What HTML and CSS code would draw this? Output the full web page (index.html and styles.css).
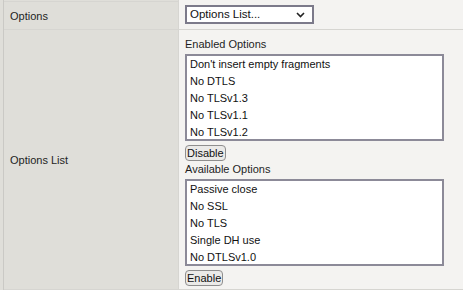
FILE: index.html
```html
<!DOCTYPE html>
<html lang="en">
<head>
  <meta charset="UTF-8">
  <title>Options</title>
  <link rel="stylesheet" href="styles.css">
</head>
<body>
  <div class="form">
    <div class="row prev">
      <div class="label"></div>
      <div class="field"></div>
    </div>

    <div class="row">
      <div class="label">Options</div>
      <div class="field top">
        <div class="dropdown">
          <span>Options List...</span>
          <svg class="chevron" width="9" height="6" viewBox="0 0 9 6">
            <polyline points="1,1 4.5,4.5 8,1" fill="none" stroke="#222" stroke-width="1.6"/>
          </svg>
        </div>
      </div>
    </div>

    <div class="row">
      <div class="label">Options List</div>
      <div class="field lists">
        <div class="caption">Enabled Options</div>
        <div class="listbox">
          <div class="item">Don't insert empty fragments</div>
          <div class="item">No DTLS</div>
          <div class="item">No TLSv1.3</div>
          <div class="item">No TLSv1.1</div>
          <div class="item">No TLSv1.2</div>
        </div>
        <button class="btn">Disable</button>

        <div class="caption">Available Options</div>
        <div class="listbox">
          <div class="item">Passive close</div>
          <div class="item">No SSL</div>
          <div class="item">No TLS</div>
          <div class="item">Single DH use</div>
          <div class="item">No DTLSv1.0</div>
        </div>
        <button class="btn">Enable</button>
      </div>
    </div>
  </div>
</body>
</html>
```

FILE: styles.css
```css
body {
  margin: 0;
  background-color: #dfded9;
  font-family: 'Liberation Sans', Arial, sans-serif;
  font-size: 11px;
  color: #1e1e1e;
}

.form {
  margin-left: 3px;
  border-left: 1px solid #cac9c5;
}

.row {
  display: flex;
  border-bottom: 1px solid #d6d5d1;
}

.prev {
  height: 1px;
}

.label {
  width: 168px;
  padding-left: 6px;
  border-right: 1px solid #d6d5d1;
  display: flex;
  align-items: center;
  background-color: #dfded9;
}

.field {
  flex: 1;
  background-color: #f4f3f1;
  padding: 3px 6px 5px;
}

.lists {
  padding-top: 6px;
  padding-bottom: 3px;
}

.dropdown {
  width: 122px;
  height: 15px;
  border: 2px solid #7c7a8a;
  background-color: #fff;
  display: flex;
  align-items: center;
  justify-content: space-between;
  padding: 0 0 0 3px;
  box-sizing: content-box;
  line-height: 15px;
  color: #111;
}

.dropdown span {
  font-size: 11.5px;
}

.chevron {
  margin-right: 7px;
  margin-top: 1px;
}

.caption {
  line-height: 17px;
  margin-bottom: 1px;
}

.listbox {
  width: 255px;
  height: 83px;
  border: 2px solid #8c8a98;
  background-color: #fff;
  overflow: hidden;
  color: #111;
}

.item {
  line-height: 17px;
  padding-left: 3px;
  white-space: nowrap;
}

.btn {
  display: block;
  margin: 4px 0 0;
  padding: 0 1px;
  height: 16px;
  font-family: 'Liberation Sans', Arial, sans-serif;
  font-size: 11px;
  line-height: 14px;
  color: #111;
  background-color: #ebeae8;
  border: 1px solid #8f8e8e;
  border-radius: 4px;
}
```
